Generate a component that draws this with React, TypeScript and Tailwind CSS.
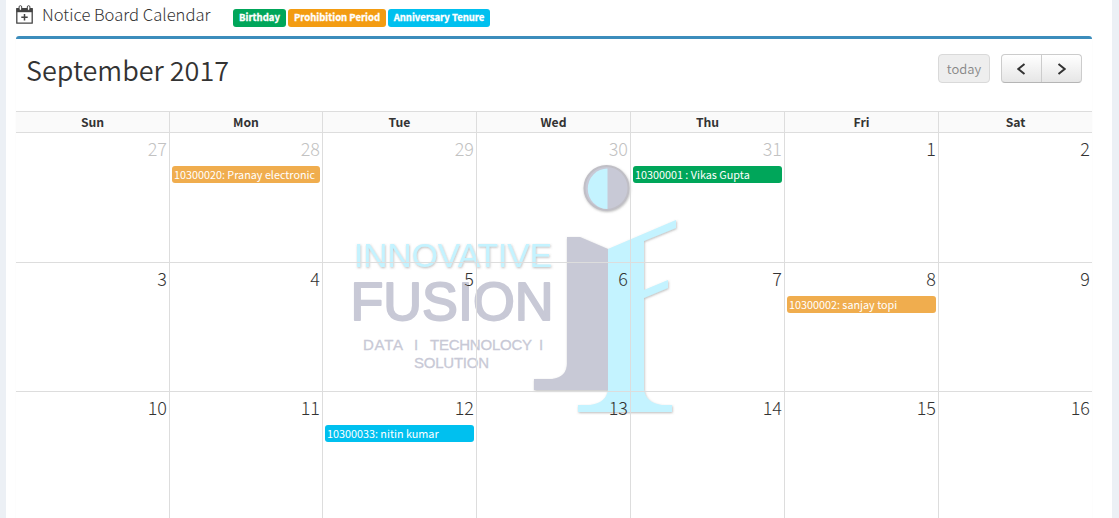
import React from "react";

type Tone = "green" | "orange" | "amber" | "aqua";
type Day = { n: number; muted?: boolean; event?: { text: string; tone: Tone } };

const tones: Record<Tone, string> = {
  green: "bg-[#00a65a]",
  orange: "bg-[#f39c12]",
  amber: "bg-[#f0ad4e]",
  aqua: "bg-[#00c0ef]",
};

const weekdays = ["Sun", "Mon", "Tue", "Wed", "Thu", "Fri", "Sat"];

const weeks: Day[][] = [
  [
    { n: 27, muted: true },
    { n: 28, muted: true, event: { text: "10300020: Pranay electronic", tone: "amber" } },
    { n: 29, muted: true },
    { n: 30, muted: true },
    { n: 31, muted: true, event: { text: "10300001 : Vikas Gupta", tone: "green" } },
    { n: 1 },
    { n: 2 },
  ],
  [{ n: 3 }, { n: 4 }, { n: 5 }, { n: 6 }, { n: 7 }, { n: 8, event: { text: "10300002: sanjay topi", tone: "amber" } }, { n: 9 }],
  [{ n: 10 }, { n: 11 }, { n: 12, event: { text: "10300033: nitin kumar", tone: "aqua" } }, { n: 13 }, { n: 14 }, { n: 15 }, { n: 16 }],
];

const columns = "grid grid-cols-[154px_153px_154px_154px_154px_154px_153px]";

function CalendarPlusIcon() {
  return (
    <svg className="h-[19px] w-[17px] shrink-0" viewBox="0 0 17 19" fill="none">
      <path d="M.8 3.600h15.400v14.600H.8z" stroke="#444" strokeWidth="1.3" strokeLinejoin="round" />
      <path d="M.5 3.200h16V7.200H.5z" fill="#444" />
      <rect x="3.100" y=".7" width="2.600" height="4.600" rx="1.200" fill="#fff" stroke="#444" />
      <rect x="11.300" y=".7" width="2.600" height="4.600" rx="1.200" fill="#fff" stroke="#444" />
      <path d="M8.500 9v6.400M5.300 12.200h6.400" stroke="#444" strokeWidth="1.5" />
    </svg>
  );
}

function Label({ tone, className, children }: { tone: Tone; className: string; children: string }) {
  return (
    <span className={`flex h-[18px] items-center justify-center whitespace-nowrap rounded-[3px] text-[9.500px] font-bold leading-none text-white [-webkit-text-stroke:0.3px_white] ${tones[tone]} ${className}`}>
      {children}
    </span>
  );
}

function Watermark() {
  return (
    <svg className="pointer-events-none absolute left-[324px] top-[120px] h-[260px] w-[350px]" viewBox="340 159 350 260">
      <defs>
        <filter id="edge" x="-10%" y="-10%" width="120%" height="120%">
          <feDropShadow dx="0.6" dy="1" stdDeviation="0.8" floodColor="#777" floodOpacity="0.5" />
        </filter>
      </defs>
      <g filter="url(#edge)">
        <circle cx="606.500" cy="188" r="22" fill="#c8c9d6" stroke="#c0bfc6" strokeWidth="2" />
        <path d="M607.500 168.500A19.500 20 0 0 0 607.500 209Z" fill="#c4f3ff" />
        <path d="M567 237h13l28 12v141h-74v-11h18q15-2 15-16Z" fill="#c8c9d6" />
        <path d="M608 249l68-29v8l-32 13v49l24-10v8l-24 10v92q2 13 18 15h10v7h-94v-7h12q16-2 18-15Z" fill="#c4f3ff" />
      </g>
      <g fontFamily="'Liberation Sans', Arial, sans-serif">
        <text x="354" y="267" fontSize="33" textLength="198" lengthAdjust="spacingAndGlyphs" fill="#c4f3ff" filter="url(#edge)">INNOVATIVE</text>
        <text x="350.500" y="320" fontSize="54" textLength="203" lengthAdjust="spacingAndGlyphs" fill="#c8c9d6" stroke="#c8c9d6" strokeWidth="2" strokeLinejoin="round">FUSION</text>
        <g fontSize="15" fill="#c8c9d6" stroke="#c8c9d6" strokeWidth="0.300">
          <text x="363" y="350" textLength="40">DATA</text>
          <text x="414" y="350">I</text>
          <text x="430" y="350" textLength="102">TECHNOLOCY</text>
          <text x="539" y="350">I</text>
          <text x="414" y="367.500" textLength="75">SOLUTION</text>
        </g>
      </g>
    </svg>
  );
}

function DayCell({ day, last }: { day: Day; last: boolean }) {
  return (
    <div className={`flex flex-col px-[2px] ${last ? "" : "border-r border-[#ddd]"}`}>
      <span className={`h-[33px] pt-[3px] text-right text-[18px] font-light leading-[24px] ${day.muted ? "text-[#c2c2c2]" : "text-[#333]"}`}>
        {day.n}
      </span>
      {day.event && (
        <div className={`h-[17px] overflow-hidden whitespace-nowrap rounded-[3px] px-[2px] text-[10.800px] leading-[17px] text-white ${tones[day.event.tone]}`}>
          {day.event.text}
        </div>
      )}
    </div>
  );
}

export default function App() {
  return (
    <div className="h-[518px] w-full overflow-hidden bg-[#ecf0f5] pl-[6px] pr-[7px] font-['Noto_Sans_CJK_SC','Open_Sans',sans-serif] text-[#333]">
      <main className="h-full bg-white pl-[10px] pr-[20px]">
        <header className="flex h-[36px] items-start pt-[5px]">
          <CalendarPlusIcon />
          <h1 className="-mt-px ml-[9px] w-[191px] whitespace-nowrap text-[16.600px] font-light leading-[20px] text-[#333]">Notice Board Calendar</h1>
          <div className="mt-[4px] flex gap-[2px]">
            <Label tone="green" className="w-[53px]">Birthday</Label>
            <Label tone="orange" className="w-[98px]">Prohibition Period</Label>
            <Label tone="aqua" className="w-[102px]">Anniversary Tenure</Label>
          </div>
        </header>
        <section className="relative h-[483px] rounded-t-[3px] border-t-[3px] border-[#3c8dbc] shadow-[0_1px_1px_rgba(0,0,0,0.1)]">
          <Watermark />
          <div className="relative">
            <div className="flex h-[72px] items-start justify-between pl-[10px] pr-[10px] pt-[15px]">
              <h2 className="-mt-px whitespace-nowrap text-[27px] font-[350] leading-[34px]">September 2017</h2>
              <div className="flex gap-[11px]">
                <button className="h-[29px] w-[52px] rounded-[4px] border border-[#d9d9d9] bg-[#eee] text-[13px] font-[350] leading-none text-[#888]">today</button>
                <div className="flex h-[29px] w-[81px] overflow-hidden rounded-[4px] border border-[#ccc] border-b-[#b5b5b5] bg-gradient-to-b from-white to-[#e6e6e6]">
                  <button className="flex w-[40px] items-center justify-center border-r border-[#ccc] pr-[2px]">
                    <svg className="h-[12px] w-[10px]" viewBox="0 0 10 12"><path d="M8.500 1L2.300 6L8.500 11" fill="none" stroke="#333" strokeWidth="2" /></svg>
                  </button>
                  <button className="flex w-[39px] items-center justify-center">
                    <svg className="h-[12px] w-[10px]" viewBox="0 0 10 12"><path d="M1.500 1L7.700 6L1.500 11" fill="none" stroke="#333" strokeWidth="2" /></svg>
                  </button>
                </div>
              </div>
            </div>
            <div className={`${columns} h-[22px] border-y border-[#ddd] bg-[#fafafa]`}>
              {weekdays.map((d, i) => (
                <div key={d} className={`text-center text-[12.200px] font-bold leading-[20px] ${i < 6 ? "border-r border-[#ddd]" : ""}`}>{d}</div>
              ))}
            </div>
            {weeks.map((week, i) => (
              <div key={week[0].n} className={`${columns} border-b border-[#ddd] ${i === 0 ? "h-[130px]" : "h-[129px]"}`}>
                {week.map((day, j) => (
                  <DayCell key={day.n} day={day} last={j === 6} />
                ))}
              </div>
            ))}
          </div>
        </section>
      </main>
    </div>
  );
}
